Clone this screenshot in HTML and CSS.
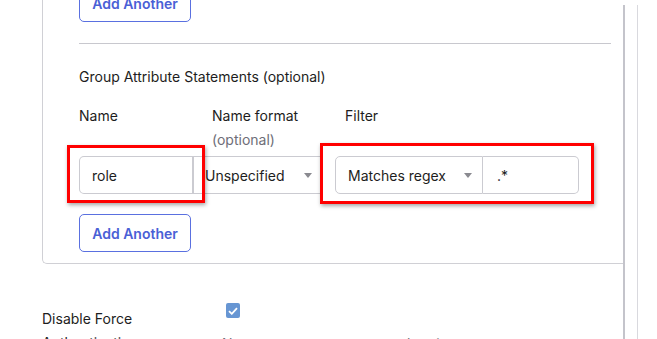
FILE: index.html
```html
<!DOCTYPE html>
<html lang="en">
<head>
    <meta charset="UTF-8" />
    <meta name="viewport" content="width=device-width, initial-scale=1.0" />
    <title>Attribute Statements</title>
    <link rel="stylesheet" href="styles.css">
</head>
<body>
    <div class="page">
        <div class="main">
            <!-- Attribute statements panel -->
            <div class="panel">
                <button class="add-btn add-top">Add Another</button>
                <hr class="divider">
                <div class="section-title">Group Attribute Statements (optional)</div>

                <div class="label-row">
                    <div class="col-label">Name</div>
                    <div class="col-label">Name format<span class="hint">(optional)</span></div>
                    <div class="col-label">Filter</div>
                </div>

                <div class="input-row">
                    <div class="name-group">
                        <div class="field name-field marked marked-left">role</div>
                        <div class="field select-field format-field">
                            <span>Unspecified</span><span class="caret"></span>
                        </div>
                    </div>
                    <div class="filter-group marked marked-right">
                        <div class="field select-field filter-select">
                            <span>Matches regex</span><span class="caret"></span>
                        </div>
                        <div class="field value-field">.*</div>
                    </div>
                </div>

                <button class="add-btn">Add Another</button>
            </div>

            <!-- Settings row -->
            <div class="setting-row">
                <div class="setting-label">Disable Force Authentication</div>
                <div class="setting-value">
                    <span class="checkbox">
                        <svg width="10" height="8" viewBox="0 0 10 8"><path d="M1 4.2 L3.8 6.8 L9 1.2" fill="none" stroke="#fff" stroke-width="1.8"/></svg>
                    </span>
                    <p class="setting-help">Never prompt user to re-authenticate</p>
                </div>
            </div>
        </div>
        <div class="gutter"></div>
    </div>
</body>
</html>
```

FILE: styles.css
```css
body {
    margin: 0;
    font-family: Inter, "Noto Sans", sans-serif;
    font-size: 14px;
    color: #1d1d21;
    background: #fff;
    overflow: hidden;
}

.page {
    display: flex;
    padding-top: 5px;
    height: 100vh;
    box-sizing: border-box;
}

.main {
    width: 581px;
    padding-left: 42px;
    border-right: 2px solid #c4c4cb;
}

.gutter {
    width: 12px;
    border-right: 1px solid #d9d9de;
}

/* Panel */
.panel {
    border: 1px solid #d0d0d5;
    border-top: none;
    border-right: none;
    border-radius: 0 0 0 5px;
    padding: 0 12px 11px 36px;
}

.add-btn {
    display: block;
    height: 38px;
    width: 112px;
    padding: 0;
    font-family: inherit;
    font-size: 14px;
    font-weight: 600;
    color: #4a60d6;
    background: #fff;
    border: 1px solid #5a70e0;
    border-radius: 5px;
}

.add-top {
    margin-top: -21px;
}

.divider {
    border: none;
    border-top: 1px solid #c8c8ce;
    margin: 21px 0 0;
}

.section-title {
    line-height: 24px;
    margin-top: 21px;
}

.label-row {
    display: flex;
    margin-top: 15px;
}

.col-label {
    width: 133px;
    line-height: 24px;
}

.hint {
    display: block;
    color: #6e6e78;
}

/* Inputs */
.input-row {
    display: flex;
    gap: 14px;
    margin-top: 4px;
}

.name-group,
.filter-group {
    display: flex;
}

.field {
    height: 38px;
    box-sizing: border-box;
    border: 1px solid #cbcbd1;
    display: flex;
    align-items: center;
}

.name-field {
    width: 115px;
    padding-left: 12px;
    border-right-width: 2px;
    border-radius: 5px 0 0 5px;
}

.format-field {
    width: 127px;
    padding: 0 9px 0 11px;
    border-left: none;
    border-right: none;
}

.select-field {
    justify-content: space-between;
}

.caret {
    width: 0;
    height: 0;
    border-left: 4px solid transparent;
    border-right: 4px solid transparent;
    border-top: 5px solid #8a8a90;
}

.filter-select {
    width: 148px;
    padding: 0 10px 0 12px;
    border-radius: 5px 0 0 5px;
}

.value-field {
    width: 96px;
    padding-left: 14px;
    border-left: none;
    border-radius: 0 5px 5px 0;
}

/* Red annotation boxes */
.marked {
    position: relative;
}

.marked::after {
    content: "";
    position: absolute;
    border: 3px solid #ff0000;
    box-shadow: 1px 2px 4px rgba(0, 0, 0, 0.35);
}

.marked-left::after {
    left: -13px;
    right: -13px;
    top: -12px;
    bottom: -10px;
}

.marked-right::after {
    left: -15px;
    right: -15px;
    top: -13px;
    bottom: -10px;
}

.add-btn:last-child {
    margin-top: 20px;
}

/* Settings */
.setting-row {
    display: flex;
    margin-top: 43px;
}

.setting-label {
    width: 150px;
    margin-right: 30px;
    line-height: 24px;
}

.checkbox {
    display: flex;
    align-items: center;
    justify-content: center;
    width: 14px;
    height: 15px;
    margin: -4px 0 0 4px;
    background: #6796d3;
    border-radius: 2px;
}

.setting-help {
    margin: 14px 0 0;
    color: #6e6e78;
    line-height: 24px;
}
```
